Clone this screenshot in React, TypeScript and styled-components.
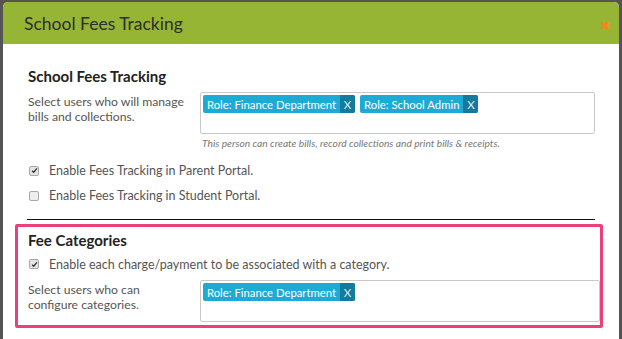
import React from "react"
import styled, { createGlobalStyle } from "styled-components"

const GlobalStyle = createGlobalStyle`
  html, body {
    margin: 0;
    padding: 0;
    background: #545454;
    font-family: Lato, "Open Sans", sans-serif;
  }
`

const Backdrop = styled.div`
  width: 622px;
  height: 339px;
  overflow: hidden;
  padding: 2px 3px 0 3px;
  box-sizing: border-box;
`

const Modal = styled.div`
  width: 616px;
  background: #fff;
  border-radius: 5px 5px 0 0;
  overflow: hidden;
  height: 400px;
`

const ModalHeader = styled.div`
  height: 42px;
  background: #97b535;
  display: flex;
  align-items: center;
  justify-content: space-between;
  padding: 0 9px 0 21px;
`

const ModalTitle = styled.h2`
  margin: 0;
  font-size: 17.5px;
  font-weight: 400;
  color: #2d2d2d;
`

const CloseButton = styled.span`
  color: #f28a1a;
  font-size: 12px;
  font-weight: 700;
  margin-top: 5px;
`

const ModalBody = styled.div`
  padding: 23px 24px 0 25px;
`

const SectionTitle = styled.h3<{ $gap: number }>`
  margin: 0 0 ${(p) => p.$gap}px;
  font-size: 15px;
  line-height: 18px;
  font-weight: 700;
  color: #222;
`

const FieldRow = styled.div<{ $top?: number }>`
  display: flex;
  align-items: flex-start;
  margin-top: ${(p) => p.$top ?? 0}px;
`

const FieldLabel = styled.div`
  width: 172px;
  font-size: 12.2px;
  line-height: 15px;
  color: #555;
  padding-top: 2px;
`

const FieldControl = styled.div`
  flex: 1;
`

const TagBox = styled.div`
  border: 1px solid #c9c9c9;
  border-radius: 2px;
  height: 42px;
  box-sizing: border-box;
  padding: 2px;
  display: flex;
  align-items: flex-start;
  gap: 5px;
`

const Tag = styled.span`
  display: inline-flex;
  align-items: stretch;
  height: 18px;
  background: #1dabd6;
  border-radius: 2px;
  color: #fff;
  font-size: 11.3px;
  overflow: hidden;
`

const TagText = styled.span`
  padding: 0 4px;
  display: flex;
  align-items: center;
`

const TagRemove = styled.span`
  background: #137c9d;
  width: 15px;
  display: flex;
  align-items: center;
  justify-content: center;
  font-size: 11.5px;
  color: #d8eef5;
`

const HelpText = styled.div`
  font-size: 10.2px;
  line-height: 12px;
  font-style: italic;
  color: #777;
  margin-top: 3px;
  padding-left: 2px;
`

const CheckList = styled.div`
  margin-top: 9px;
`

const CheckRow = styled.label<{ $height: number }>`
  display: flex;
  align-items: center;
  font-size: 12.5px;
  color: #555;
  height: ${(p) => p.$height}px;
`

const CheckBox = styled.span<{ $checked?: boolean }>`
  width: 8px;
  height: 8px;
  border: 1px solid #a8a8a8;
  border-radius: 2px;
  background: ${(p) => (p.$checked ? "#e4e4e4" : "#eeeeee")};
  margin: 0 10px 0 1px;
  display: flex;
  align-items: center;
  justify-content: center;
`

const Divider = styled.hr`
  border: none;
  border-top: 1px solid #111;
  margin: 11px 0 4px -1px;
  width: 568px;
`

const Highlight = styled.div`
  border: 3px solid #ec407a;
  border-radius: 2px;
  margin-left: -13px;
  width: 588px;
  box-sizing: border-box;
  padding: 4px 0 0 10px;
  height: 104px;
`

const Check = () => (
  <svg width="7" height="7" viewBox="0 0 8 8">
    <path d="M1.2 4.2 L3.1 6 L6.8 1.6" fill="none" stroke="#333" strokeWidth="1.5" />
  </svg>
)

const RoleTag = ({ label }: { label: string }) => (
  <Tag>
    <TagText>{label}</TagText>
    <TagRemove>X</TagRemove>
  </Tag>
)

const App = () => (
  <>
    <GlobalStyle />
    <Backdrop>
      <Modal>
        <ModalHeader>
          <ModalTitle>School Fees Tracking</ModalTitle>
          <CloseButton>✖</CloseButton>
        </ModalHeader>
        <ModalBody>
          <SectionTitle $gap={7}>School Fees Tracking</SectionTitle>
          <FieldRow>
            <FieldLabel>
              Select users who will manage
              <br />
              bills and collections.
            </FieldLabel>
            <FieldControl>
              <TagBox>
                <RoleTag label="Role: Finance Department" />
                <RoleTag label="Role: School Admin" />
              </TagBox>
              <HelpText>
                This person can create bills, record collections and print bills &amp; receipts.
              </HelpText>
            </FieldControl>
          </FieldRow>
          <CheckList>
            <CheckRow $height={25}>
              <CheckBox $checked>
                <Check />
              </CheckBox>
              Enable Fees Tracking in Parent Portal.
            </CheckRow>
            <CheckRow $height={25}>
              <CheckBox />
              Enable Fees Tracking in Student Portal.
            </CheckRow>
          </CheckList>
          <Divider />
          <Highlight>
            <SectionTitle $gap={5}>Fee Categories</SectionTitle>
            <CheckRow $height={20}>
              <CheckBox $checked>
                <Check />
              </CheckBox>
              Enable each charge/payment to be associated with a category.
            </CheckRow>
            <FieldRow $top={6}>
              <FieldLabel>
                Select users who can
                <br />
                configure categories.
              </FieldLabel>
              <FieldControl>
                <TagBox>
                  <RoleTag label="Role: Finance Department" />
                </TagBox>
              </FieldControl>
            </FieldRow>
          </Highlight>
        </ModalBody>
      </Modal>
    </Backdrop>
  </>
)

export default App
